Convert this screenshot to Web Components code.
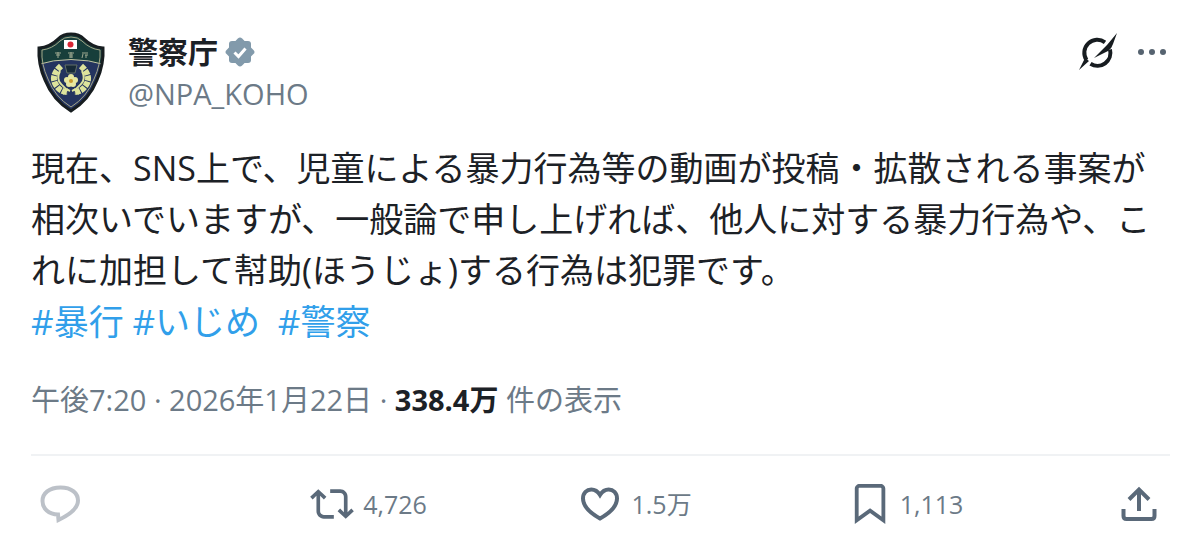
<!DOCTYPE html>
<html lang="ja">
<head>
<meta charset="utf-8">
<meta name="viewport" content="width=device-width, initial-scale=1">
<title>警察庁 @NPA_KOHO</title>
<style>
    body {
        margin: 0;
        background: #fff;
        color: #1c2126;
        font-family: "Open Sans", "Noto Sans CJK JP", sans-serif;
        --muted: #6c7a87;
        --line: #f0f2f4;
        --link: #319fea;
    }
</style>
</head>
<body>

<social-post>
    <post-author slot="author" handle="@NPA_KOHO">警察庁</post-author>
    <post-text slot="text">現在、SNS上で、児童による暴力行為等の動画が投稿・拡散される事案が相次いでいますが、一般論で申し上げれば、他人に対する暴力行為や、これに加担して幇助(ほうじょ)する行為は犯罪です。<br><hash-tag>暴行</hash-tag> <hash-tag>いじめ</hash-tag>&nbsp; <hash-tag>警察</hash-tag></post-text>
    <post-meta slot="meta" views="338.4万">午後7:20 · 2026年1月22日</post-meta>
    <post-action slot="actions" icon="reply" label="返信"></post-action>
    <post-action slot="actions" icon="repost" label="リポスト">4,726</post-action>
    <post-action slot="actions" icon="like" label="いいね">1.5万</post-action>
    <post-action slot="actions" icon="bookmark" label="ブックマーク">1,113</post-action>
    <post-action slot="actions" icon="share" label="共有"></post-action>
</social-post>

<script>
(
    function () {

        const icons = {
            reply: '<svg width="40" height="38" viewBox="0 0 40 38" fill="none" stroke="#bcc1c8" stroke-width="4"><path d="M18 29.500C8.500 29.500 2.500 23.500 2.500 16S9 2.500 20.500 2.500 38 8.500 38 15.500C38 24 29 30 18.500 35z"/></svg>',
            repost: '<svg width="44" height="30" viewBox="0 3.800 24 16.400" fill="currentColor"><path d="M4.500 3.880l4.432 4.140-1.364 1.460L5.500 7.550V16c0 1.100.896 2 2 2H13v2H7.500c-2.209 0-4-1.790-4-4V7.550L1.432 9.480.068 8.020 4.500 3.880zM16.500 6H11V4h5.500c2.209 0 4 1.790 4 4v8.450l2.068-1.930 1.364 1.460-4.432 4.140-4.432-4.140 1.364-1.460 2.068 1.930V8c0-1.100-.896-2-2-2z"/></svg>',
            like: '<svg width="42" height="34" viewBox="0 0 42 34" fill="none" stroke="currentColor" stroke-width="4"><path d="M19 31.500C10 26.500 2 19.500 2 11.500 2 6 5.800 2.500 10.300 2.500c3.800 0 6.700 2.300 8.700 5.500 2-3.200 4.900-5.500 8.700-5.500C32.200 2.500 36 6 36 11.500c0 8-8 15-17 20z"/></svg>',
            bookmark: '<svg width="40" height="40" viewBox="2 2 21 21" fill="currentColor"><path d="M4 4.500C4 3.120 5.119 2 6.500 2h11C18.881 2 20 3.120 20 4.500v18.440l-8-5.710-8 5.710V4.500zM6.500 4c-.276 0-.5.220-.5.500v14.560l6-4.290 6 4.290V4.500c0-.280-.224-.5-.5-.5h-11z"/></svg>',
            share: '<svg width="36" height="36" viewBox="0 0 36 36" fill="none" stroke="currentColor" stroke-width="4"><path d="M18 25V4M8 13.500L18 3.500l10 10M2.500 23v7q0 3 3 3h25q3 0 3-3v-7"/></svg>'
        };

        /**
         * Shared base, attaches an open shadow root with the given markup
         * @extends HTMLElement
         */
        class PostElement extends HTMLElement {

            constructor() {
                super();
                this.attachShadow({ mode: 'open' });
            }

            connectedCallback() {
                const template = document.createElement('template');
                template.innerHTML = this.markup();
                this.shadowRoot.replaceChildren(template.content.cloneNode(true));
            }
        }

        /**
         * The post itself: author, text, meta line and row of actions
         */
        class SocialPost extends PostElement {
            markup() {
                return `
                    <style>
                        :host { display: block; padding: 30px 30px 24px 31px; }
                        .meta { padding: 32px 0 34px; border-bottom: 2px solid var(--line); }
                        .actions {
                            display: grid;
                            grid-template-columns: repeat(4, 1fr) auto;
                            align-items: center;
                            padding: 24px 13px 0 9px;
                        }
                    </style>
                    <article>
                        <slot name="author"></slot>
                        <slot name="text"></slot>
                        <div class="meta"><slot name="meta"></slot></div>
                        <div class="actions"><slot name="actions"></slot></div>
                    </article>`;
            }
        }

        /**
         * Shield emblem used as the avatar
         */
        class PoliceEmblem extends PostElement {
            markup() {
                return `
                    <style>
                        :host { display: block; flex: none; }
                        svg { display: block; }
                    </style>
                    <svg width="70" height="84" viewBox="0 -2 70 84" aria-hidden="true">
                        <defs>
                            <clipPath id="shield"><path d="M3 16Q14 15 22 7 27 2 35 2T48 7Q56 15 67 16 68 32 61 48 53 68 35 79 17 68 9 48 2 32 3 16z"/></clipPath>
                        </defs>
                        <g clip-path="url(#shield)">
                            <rect width="70" height="82" fill="#173e3b"/>
                            <path d="M0 33Q35 22 70 33V82H0z" fill="#24345f"/>
                            <path d="M0 33Q35 22 70 33" fill="none" stroke="#c2c7a0" stroke-width="1"/>
                        </g>
                        <path d="M3 16Q14 15 22 7 27 2 35 2T48 7Q56 15 67 16 68 32 61 48 53 68 35 79 17 68 9 48 2 32 3 16z" fill="none" stroke="#171d20" stroke-width="3"/>
                        <path d="M6 18Q16 17 24 9 28 5 35 5T46 9Q54 17 64 18 65 32 58 47 51 65 35 75 19 65 12 47 5 32 6 18z" fill="none" stroke="#a3a588" stroke-width="1"/>
                        <rect x="28" y="8" width="13" height="9" fill="#fff"/>
                        <circle cx="34.500" cy="12.500" r="3" fill="#d92735"/>
                        <g fill="none" stroke="#dde39c">
                            <path d="M25 34Q14 44 20 53 24 60 32 60M45 34Q56 44 50 53 46 60 38 60" stroke-width="6" stroke-dasharray="5 1"/>
                            <path d="M24 39Q20 47 25 52 29 57 34 59M46 39Q50 47 45 52 41 57 36 59" stroke-width="2"/>
                            <path d="M32 57l-5 5M38 57l5 5" stroke-width="2"/>
                        </g>
                        <path d="M29 33h12l-2 8h-8z" fill="#172a38" stroke="#626f67"/>
                        <g fill="#e7e7a0"><circle cx="35" cy="45" r="3"/><circle cx="39" cy="48" r="3"/><circle cx="37" cy="52" r="3"/><circle cx="33" cy="52" r="3"/><circle cx="31" cy="48" r="3"/></g>
                        <circle cx="35" cy="49" r="2" fill="#c99a30"/>
                        <g fill="none" stroke="#a0aa92" stroke-width="1"><path d="M19 21h6M20 23h4M22 20v6M32 21h6M33 23h4M33 25h4M35 20v6M46 21h6M47 22l-1 4M49 23h3M50 23v3"/></g>
                    </svg>`;
            }
        }

        /**
         * Avatar, display name, handle and the controls at the far end
         */
        class PostAuthor extends PostElement {
            markup() {
                return `
                    <style>
                        :host { display: flex; align-items: flex-start; justify-content: space-between; padding: 0 3px 0 5px; }
                        .who { display: flex; gap: 22px; }
                        .name { display: flex; align-items: center; gap: 6px; font-size: 30px; font-weight: 700; line-height: 44px; }
                        .handle { font-size: 29px; line-height: 40px; color: var(--muted); text-decoration: none; }
                        .tools { display: flex; align-items: center; gap: 18px; height: 44px; }
                        button { border: 0; padding: 0; background: none; color: #566370; cursor: pointer; }
                        svg { display: block; }
                    </style>
                    <div class="who">
                        <police-emblem></police-emblem>
                        <div>
                            <div class="name">
                                <slot></slot>
                                <svg width="32" height="32" viewBox="0 0 32 32" fill="#829aab" role="img" aria-label="認証済み">
                                    <rect x="5" y="5" width="22" height="22" rx="3"/>
                                    <rect x="5" y="5" width="22" height="22" rx="3" transform="rotate(45 16 16)"/>
                                    <path d="M10.500 16.500l4 4 7-8" fill="none" stroke="#fff" stroke-width="3"/>
                                </svg>
                            </div>
                            <a class="handle" href="#">${this.getAttribute('handle')}</a>
                        </div>
                    </div>
                    <div class="tools">
                        <button type="button" aria-label="Grok">
                            <svg width="42" height="42" viewBox="0 0 42 42" fill="#171c20">
                                <path d="M9.500 29A13 13 0 0 1 28 11.300M13.500 32.800A13 13 0 0 0 33 18.500" fill="none" stroke="#171c20" stroke-width="4"/>
                                <path d="M40 2L36 13Q35 17 31 20L17 27 30 14zM2 39L8 27l4 3z"/>
                            </svg>
                        </button>
                        <button type="button" aria-label="もっと見る">
                            <svg width="30" height="8" viewBox="0 0 30 8" fill="currentColor"><circle cx="4" cy="4" r="3"/><circle cx="15" cy="4" r="3"/><circle cx="26" cy="4" r="3"/></svg>
                        </button>
                    </div>`;
            }
        }

        class PostText extends PostElement {
            markup() {
                return `
                    <style>
                        :host { display: block; margin-top: 29px; font-size: 34px; line-height: 51px; }
                    </style>
                    <slot></slot>`;
            }
        }

        class HashTag extends PostElement {
            markup() {
                return `
                    <style>
                        :host { display: inline; font-size: 35px; }
                        a { color: var(--link); text-decoration: none; }
                    </style>
                    <a href="#">#<slot></slot></a>`;
            }
        }

        /**
         * Time of the post and its number of views
         */
        class PostMeta extends PostElement {
            markup() {
                return `
                    <style>
                        :host { display: block; font-size: 29px; line-height: 40px; color: var(--muted); }
                        b { color: #1c2126; }
                    </style>
                    <slot></slot> · <b>${this.getAttribute('views')}</b> 件の表示`;
            }
        }

        /**
         * Icon button with an optional count
         */
        class PostAction extends PostElement {
            markup() {
                return `
                    <style>
                        :host { display: block; }
                        button {
                            display: flex;
                            align-items: center;
                            gap: 9px;
                            min-height: 48px;
                            border: 0;
                            padding: 0;
                            background: none;
                            color: #5a6979;
                            font: inherit;
                            font-size: 25px;
                            line-height: 36px;
                            cursor: pointer;
                        }
                        svg { display: block; flex: none; }
                        span { color: var(--muted); }
                    </style>
                    <button type="button" aria-label="${this.getAttribute('label')}">
                        ${icons[this.getAttribute('icon')]}
                        ${this.textContent ? '<span><slot></slot></span>' : ''}
                    </button>`;
            }
        }

        window.customElements.define('police-emblem', PoliceEmblem);
        window.customElements.define('hash-tag', HashTag);
        window.customElements.define('post-author', PostAuthor);
        window.customElements.define('post-text', PostText);
        window.customElements.define('post-meta', PostMeta);
        window.customElements.define('post-action', PostAction);
        window.customElements.define('social-post', SocialPost);

    }
)();
</script>
</body>
</html>
